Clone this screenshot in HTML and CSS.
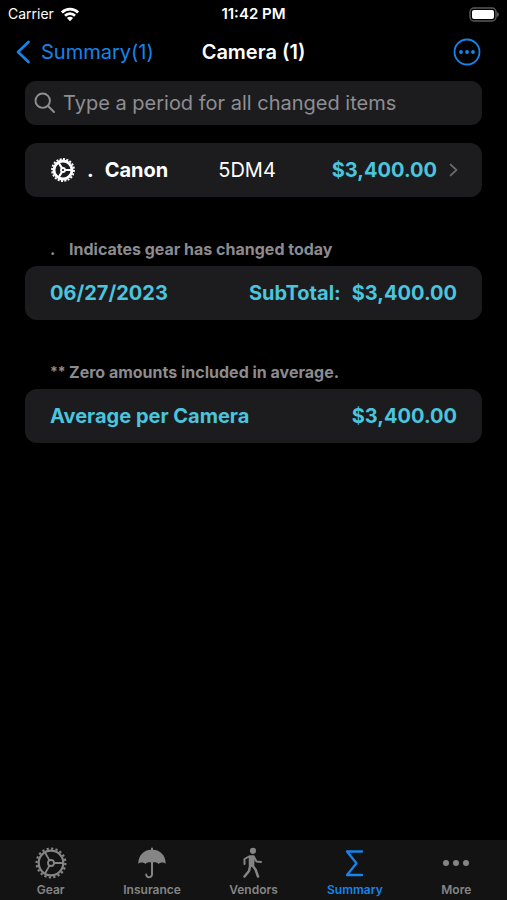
FILE: index.html
```html
<!DOCTYPE html>
<html lang="en">
<head>
<meta charset="utf-8">
<meta name="viewport" content="width=device-width, initial-scale=1">
<title>Camera (1)</title>
<link rel="stylesheet" href="styles.css">
</head>
<body>
<div class="screen">
  <div class="status">
    <span class="carrier">Carrier
      <svg width="20" height="15" viewBox="0 0 20 15" fill="none" stroke="#fff" stroke-width="2.7"><path d="M1.9 5.500a11.500 11.500 0 0 1 16.200 0M5 8.800a7 7 0 0 1 10 0"/><path d="M10 14.200 6.900 11a4.400 4.400 0 0 1 6.200 0z" fill="#fff" stroke="none"/></svg>
    </span>
    <span class="clock">11:42 PM</span>
    <svg class="battery" width="31" height="15" viewBox="0 0 31 15"><rect x="2" y="1" width="26" height="13" rx="4" fill="none" stroke="#59595b" stroke-width="1.500"/><rect x="4" y="3" width="22" height="9" rx="2" fill="#fff"/><path d="M29 5v5q2-1 2-2.500t-2-2.500z" fill="#59595b"/></svg>
  </div>
  <header class="navbar">
    <a class="back" href="#summary">
      <svg width="15" height="24" viewBox="0 0 15 24" fill="none" stroke="currentColor" stroke-width="2.600" stroke-linecap="round" stroke-linejoin="round"><path d="M12.500 2 2 12l10.500 10"/></svg>
      Summary(1)
    </a>
    <h1>Camera (1)</h1>
    <button class="options" type="button" aria-label="Options">
      <svg width="28" height="28" viewBox="0 0 28 28" fill="currentColor"><circle cx="14" cy="14" r="12.500" fill="none" stroke="currentColor" stroke-width="1.800"/><circle cx="8" cy="14" r="1.900"/><circle cx="14" cy="14" r="1.900"/><circle cx="20" cy="14" r="1.900"/></svg>
    </button>
  </header>
  <main>
    <label class="search">
      <svg width="22" height="22" viewBox="0 0 22 22" fill="none" stroke="currentColor" stroke-width="1.900" stroke-linecap="round"><circle cx="8.700" cy="8.700" r="7.200"/><path d="m14 14 6 6"/></svg>
      <input type="search" aria-label="Search" placeholder="Type a period for all changed items">
    </label>
    <a class="card item" href="#canon">
      <svg width="26" height="26" viewBox="0 0 26 26" fill="none" stroke="currentColor"><circle cx="13" cy="13" r="9" stroke-width="2.800"/><circle cx="13" cy="13" r="11" stroke-width="1.800" pathLength="40" stroke-dasharray="1.200 .800"/><circle cx="13" cy="13" r="2" stroke-width="1.800"/><path d="M15 13h7M12 11.200 8.500 5.500M12 14.800l-3.500 5.700" stroke-width="2.200"/></svg>
      <span class="dot">.</span>
      <span class="brand">Canon</span>
      <span class="model">5DM4</span>
      <span class="amount">$3,400.00</span>
      <svg class="chevron" width="9" height="14" viewBox="0 0 9 14" fill="none" stroke="currentColor" stroke-width="1.700" stroke-linecap="round" stroke-linejoin="round"><path d="m1.500 1.500 6 5.500-6 5.500"/></svg>
    </a>
    <section>
      <p class="note"><span class="mark">.</span>Indicates gear has changed today</p>
      <div class="card total"><span class="label">06/27/2023</span><span>SubTotal:</span><span>$3,400.00</span></div>
    </section>
    <section>
      <p class="note"><span class="mark small">**</span>Zero amounts included in average.</p>
      <div class="card total"><span class="label">Average per Camera</span><span>$3,400.00</span></div>
    </section>
  </main>
  <nav class="tabs">
    <a href="#gear"><svg width="34" height="34" viewBox="0 0 34 34" fill="none" stroke="currentColor"><circle cx="17" cy="17" r="12.300" stroke-width="2.200"/><circle cx="17" cy="17" r="14.400" stroke-width="2.200" pathLength="40" stroke-dasharray="1 1"/><circle cx="17" cy="17" r="3" stroke-width="1.800"/><path d="M20 17h9M15.500 14.400 11 6.500M15.500 19.600 11 27.500" stroke-width="1.800"/></svg>Gear</a>
    <a href="#insurance"><svg width="34" height="34" viewBox="0 0 34 34" fill="currentColor"><path d="M3.300 18C3.300 9 9 4.200 16 3.800V2.500a1 1 0 0 1 2 0v1.300c7 .4 12.700 5.200 12.700 14.200-1.300-2-5.500-2-7 0-1.300-1.600-3.600-1.900-5.700-1.500v11.700c0 5.300-7.800 5.300-7.800.3a1 1 0 0 1 2 0c0 2.500 3.800 2.500 3.800-.3V16.500c-2.100-.4-4.400-.1-5.700 1.500-1.500-2-5.700-2-7 0z"/></svg>Insurance</a>
    <a href="#vendors"><svg width="34" height="34" viewBox="0 0 34 34" fill="none" stroke="currentColor" stroke-linecap="round" stroke-linejoin="round"><circle cx="17" cy="4.800" r="3.100" fill="currentColor" stroke="none"/><path d="M14 10.500h3.500l-.5 9h-3z" fill="currentColor" stroke-width="2.500"/><path d="M13 10.500 8.500 13v5M18 11l2.500 4.500 4.500.5" stroke-width="2"/><path d="M14 20.500 13 25l-4.500 5.500M16.500 19.500l3 4 2.500 7" stroke-width="2.500"/></svg>Vendors</a>
    <a class="active" href="#summary" aria-current="page"><svg width="34" height="34" viewBox="0 0 34 34" fill="none" stroke="currentColor" stroke-width="2.300" stroke-linecap="round" stroke-linejoin="round"><path d="M24 5.500H9L18.500 17.200 9 29h15"/></svg>Summary</a>
    <a href="#more"><svg width="34" height="34" viewBox="0 0 34 34" fill="currentColor"><circle cx="7" cy="17" r="3"/><circle cx="17" cy="17" r="3"/><circle cx="27" cy="17" r="3"/></svg>More</a>
  </nav>
</div>
</body>
</html>
```
FILE: styles.css
```css
* { box-sizing: border-box; }
body {
  margin: 0;
  background: #000;
  color: #fff;
  font-family: Inter, "Liberation Sans", sans-serif;
  font-size: 20px;
  line-height: 24px;
}
a { color: inherit; text-decoration: none; }
svg { display: block; flex: none; }
.screen { min-height: 100vh; display: flex; flex-direction: column; }
.status, .navbar {
  display: grid;
  grid-template-columns: 1fr auto 1fr;
  align-items: center;
}
.status { height: 28px; padding: 0 8px; font-size: 14px; line-height: 20px; }
.carrier { display: flex; align-items: center; gap: 6px; }
.clock { font-size: 15px; font-weight: 600; }
.battery { justify-self: end; }
.navbar { height: 48px; padding: 0 16px; }
.back { display: flex; align-items: center; gap: 10px; color: #1585ec; }
h1 { margin: 0; font-size: 20px; line-height: 24px; font-weight: 600; }
.options {
  justify-self: end;
  margin-right: 10px;
  padding: 0;
  border: 0;
  background: none;
  color: #1585ec;
}
main { flex: 1; padding: 5px 25px 24px; }
.search {
  display: flex;
  align-items: center;
  gap: 7px;
  height: 44px;
  padding: 0 9px;
  border-radius: 11px;
  background: #1c1c1e;
  color: #8e8e93;
}
.search input {
  flex: 1;
  min-width: 0;
  padding: 0;
  border: 0;
  outline: 0;
  background: none;
  color: #fff;
  font: inherit;
}
.search input::placeholder { color: #8e8e93; opacity: 1; }
.card {
  display: flex;
  align-items: center;
  min-height: 54px;
  padding: 0 25px;
  border-radius: 12px;
  background: #1c1c1e;
}
.item { margin-top: 18px; padding-right: 24px; }
.dot, .brand, .amount { font-weight: 700; }
.dot { margin: 0 11px; }
.model { flex: 1; padding-left: 50px; }
.amount, .total { color: #4bc4dd; }
.chevron { margin-left: 12px; color: #68686c; }
section { margin-top: 40px; }
.note {
  display: flex;
  margin: 0;
  padding: 0 25px 5px;
  color: #8b8b90;
  font-size: 16px;
  font-weight: 700;
}
.mark { width: 19px; }
.small { font-size: 14px; }
.total { gap: 11px; font-weight: 700; }
.label { flex: 1; }
.tabs {
  display: grid;
  grid-template-columns: repeat(5, 1fr);
  padding-top: 6px;
  background: #131313;
  color: #858585;
  font-size: 12px;
  font-weight: 600;
  line-height: 20px;
}
.tabs a { display: flex; flex-direction: column; align-items: center; }
.tabs .active { color: #1585ec; }
```
